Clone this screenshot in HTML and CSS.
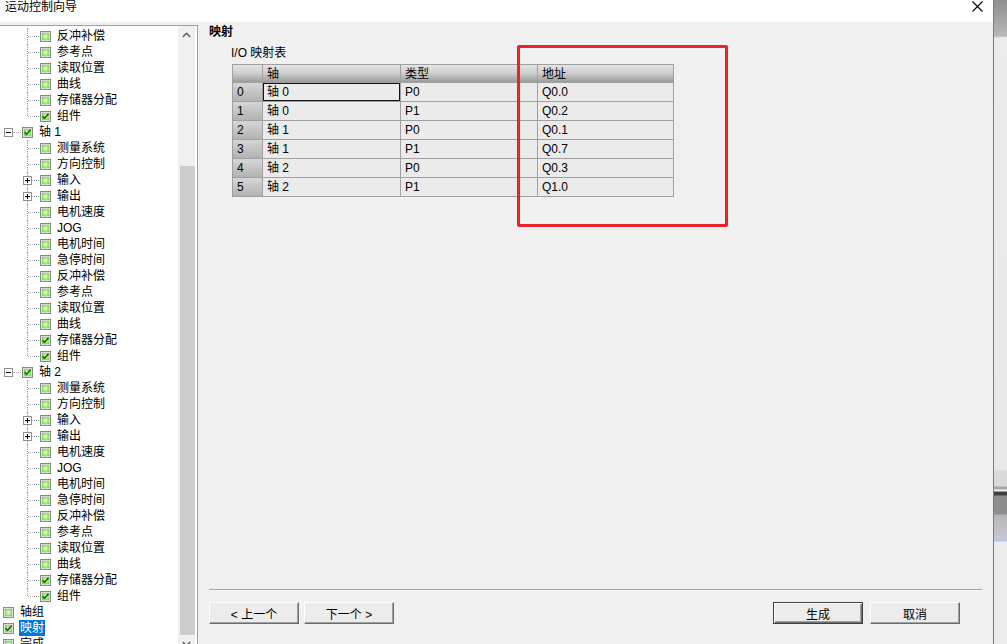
FILE: index.html
```html
<!DOCTYPE html>
<html lang="zh-CN">
<head>
<meta charset="utf-8">
<title>运动控制向导</title>
<link rel="stylesheet" href="styles.css">
</head>
<body>
<div class="window">
  <div class="titlebar">
    <span class="title">运动控制向导</span>
    <svg class="close" width="11" height="11" viewBox="0 0 11 11"><path d="M0.5 0.5L10.5 10.5M10.5 0.5L0.5 10.5" stroke="#000" stroke-width="1.1" fill="none"/></svg>
  </div>
  <div class="content">
    <div class="tree">
      <div class="tree-list">
        <div class="row l1"><span class="cb"></span><span class="lbl">反冲补偿</span></div>
        <div class="row l1"><span class="cb"></span><span class="lbl">参考点</span></div>
        <div class="row l1"><span class="cb"></span><span class="lbl">读取位置</span></div>
        <div class="row l1"><span class="cb"></span><span class="lbl">曲线</span></div>
        <div class="row l1"><span class="cb"></span><span class="lbl">存储器分配</span></div>
        <div class="row l1 last"><span class="cb on"><svg width="9" height="9" viewBox="0 0 9 9"><path d="M1.5 4.2L3.5 6.3L7.6 1.8" stroke="#1f6b0a" stroke-width="1.7" fill="none"/></svg></span><span class="lbl">组件</span></div>

        <div class="row l0"><svg class="exp" width="9" height="9" viewBox="0 0 9 9"><rect x="0.5" y="0.5" width="8" height="8" fill="#fff" stroke="#919191"/><path d="M2 4.5h5" stroke="#000"/></svg><span class="cb on"><svg width="9" height="9" viewBox="0 0 9 9"><path d="M1.5 4.2L3.5 6.3L7.6 1.8" stroke="#1f6b0a" stroke-width="1.7" fill="none"/></svg></span><span class="lbl">轴 1</span></div>
        <div class="row l1"><span class="cb"></span><span class="lbl">测量系统</span></div>
        <div class="row l1"><span class="cb"></span><span class="lbl">方向控制</span></div>
        <div class="row l1"><svg class="exp" width="9" height="9" viewBox="0 0 9 9"><rect x="0.5" y="0.5" width="8" height="8" fill="#fff" stroke="#919191"/><path d="M2 4.5h5M4.5 2v5" stroke="#000"/></svg><span class="cb"></span><span class="lbl">输入</span></div>
        <div class="row l1"><svg class="exp" width="9" height="9" viewBox="0 0 9 9"><rect x="0.5" y="0.5" width="8" height="8" fill="#fff" stroke="#919191"/><path d="M2 4.5h5M4.5 2v5" stroke="#000"/></svg><span class="cb"></span><span class="lbl">输出</span></div>
        <div class="row l1"><span class="cb"></span><span class="lbl">电机速度</span></div>
        <div class="row l1"><span class="cb"></span><span class="lbl">JOG</span></div>
        <div class="row l1"><span class="cb"></span><span class="lbl">电机时间</span></div>
        <div class="row l1"><span class="cb"></span><span class="lbl">急停时间</span></div>
        <div class="row l1"><span class="cb"></span><span class="lbl">反冲补偿</span></div>
        <div class="row l1"><span class="cb"></span><span class="lbl">参考点</span></div>
        <div class="row l1"><span class="cb"></span><span class="lbl">读取位置</span></div>
        <div class="row l1"><span class="cb"></span><span class="lbl">曲线</span></div>
        <div class="row l1"><span class="cb on"><svg width="9" height="9" viewBox="0 0 9 9"><path d="M1.5 4.2L3.5 6.3L7.6 1.8" stroke="#1f6b0a" stroke-width="1.7" fill="none"/></svg></span><span class="lbl">存储器分配</span></div>
        <div class="row l1 last"><span class="cb on"><svg width="9" height="9" viewBox="0 0 9 9"><path d="M1.5 4.2L3.5 6.3L7.6 1.8" stroke="#1f6b0a" stroke-width="1.7" fill="none"/></svg></span><span class="lbl">组件</span></div>

        <div class="row l0"><svg class="exp" width="9" height="9" viewBox="0 0 9 9"><rect x="0.5" y="0.5" width="8" height="8" fill="#fff" stroke="#919191"/><path d="M2 4.5h5" stroke="#000"/></svg><span class="cb on"><svg width="9" height="9" viewBox="0 0 9 9"><path d="M1.5 4.2L3.5 6.3L7.6 1.8" stroke="#1f6b0a" stroke-width="1.7" fill="none"/></svg></span><span class="lbl">轴 2</span></div>
        <div class="row l1"><span class="cb"></span><span class="lbl">测量系统</span></div>
        <div class="row l1"><span class="cb"></span><span class="lbl">方向控制</span></div>
        <div class="row l1"><svg class="exp" width="9" height="9" viewBox="0 0 9 9"><rect x="0.5" y="0.5" width="8" height="8" fill="#fff" stroke="#919191"/><path d="M2 4.5h5M4.5 2v5" stroke="#000"/></svg><span class="cb"></span><span class="lbl">输入</span></div>
        <div class="row l1"><svg class="exp" width="9" height="9" viewBox="0 0 9 9"><rect x="0.5" y="0.5" width="8" height="8" fill="#fff" stroke="#919191"/><path d="M2 4.5h5M4.5 2v5" stroke="#000"/></svg><span class="cb"></span><span class="lbl">输出</span></div>
        <div class="row l1"><span class="cb"></span><span class="lbl">电机速度</span></div>
        <div class="row l1"><span class="cb"></span><span class="lbl">JOG</span></div>
        <div class="row l1"><span class="cb"></span><span class="lbl">电机时间</span></div>
        <div class="row l1"><span class="cb"></span><span class="lbl">急停时间</span></div>
        <div class="row l1"><span class="cb"></span><span class="lbl">反冲补偿</span></div>
        <div class="row l1"><span class="cb"></span><span class="lbl">参考点</span></div>
        <div class="row l1"><span class="cb"></span><span class="lbl">读取位置</span></div>
        <div class="row l1"><span class="cb"></span><span class="lbl">曲线</span></div>
        <div class="row l1"><span class="cb on"><svg width="9" height="9" viewBox="0 0 9 9"><path d="M1.5 4.2L3.5 6.3L7.6 1.8" stroke="#1f6b0a" stroke-width="1.7" fill="none"/></svg></span><span class="lbl">存储器分配</span></div>
        <div class="row l1 last"><span class="cb on"><svg width="9" height="9" viewBox="0 0 9 9"><path d="M1.5 4.2L3.5 6.3L7.6 1.8" stroke="#1f6b0a" stroke-width="1.7" fill="none"/></svg></span><span class="lbl">组件</span></div>

        <div class="row root"><span class="cb"></span><span class="lbl">轴组</span></div>
        <div class="row root"><span class="cb on"><svg width="9" height="9" viewBox="0 0 9 9"><path d="M1.5 4.2L3.5 6.3L7.6 1.8" stroke="#1f6b0a" stroke-width="1.7" fill="none"/></svg></span><span class="lbl sel">映射</span></div>
        <div class="row root"><span class="cb"></span><span class="lbl">完成</span></div>
      </div>
      <div class="scroll">
        <div class="sb-btn"><svg width="9" height="6" viewBox="0 0 9 6"><path d="M0.8 5L4.5 1.3L8.2 5" stroke="#606060" stroke-width="1.6" fill="none"/></svg></div>
        <div class="sb-track"></div>
        <div class="sb-thumb"></div>
        <div class="sb-btn"><svg width="9" height="6" viewBox="0 0 9 6"><path d="M0.8 1L4.5 4.7L8.2 1" stroke="#606060" stroke-width="1.6" fill="none"/></svg></div>
      </div>
    </div>

    <div class="main">
      <div class="heading">映射</div>
      <div class="caption">I/O 映射表</div>
      <div class="grid">
        <div class="c hd corner"></div>
        <div class="c hd">轴</div>
        <div class="c hd">类型</div>
        <div class="c hd">地址</div>

        <div class="c rh">0</div><div class="c focus">轴 0</div><div class="c">P0</div><div class="c">Q0.0</div>
        <div class="c rh">1</div><div class="c">轴 0</div><div class="c">P1</div><div class="c">Q0.2</div>
        <div class="c rh">2</div><div class="c">轴 1</div><div class="c">P0</div><div class="c">Q0.1</div>
        <div class="c rh">3</div><div class="c">轴 1</div><div class="c">P1</div><div class="c">Q0.7</div>
        <div class="c rh">4</div><div class="c">轴 2</div><div class="c">P0</div><div class="c">Q0.3</div>
        <div class="c rh">5</div><div class="c">轴 2</div><div class="c">P1</div><div class="c">Q1.0</div>
      </div>

      <div class="sep"></div>
      <div class="btns">
        <button class="btn">&lt; 上一个</button>
        <button class="btn">下一个 &gt;</button>
        <button class="btn default push">生成</button>
        <button class="btn">取消</button>
      </div>
    </div>
  </div>
</div>
<div class="desk"></div>
<div class="mark"></div>
</body>
</html>
```

FILE: styles.css
```css
html, body {
  margin: 0;
  padding: 0;
}
body {
  position: relative;
  width: 1007px;
  height: 644px;
  overflow: hidden;
  display: flex;
  background: #f0f0f0;
  font-family: "Liberation Sans", "Noto Sans CJK SC", sans-serif;
  font-size: 12px;
  color: #000;
}

.window {
  width: 993px;
  flex: none;
  display: flex;
  flex-direction: column;
  background: #f0f0f0;
}

.titlebar {
  height: 22px;
  flex: none;
  background: #fff;
  display: flex;
  justify-content: space-between;
  align-items: flex-start;
  padding: 0 10px 0 5px;
}
.title {
  line-height: 14px;
  font-size: 12px;
}
.close {
  margin-top: 1px;
}

.content {
  height: 622px;
  box-sizing: border-box;
  padding-top: 3px;
  display: flex;
}

/* ---------- tree ---------- */
.tree {
  width: 198px;
  flex: none;
  box-sizing: border-box;
  background: #fff;
  border-top: 1px solid #a0a0a0;
  border-right: 1px solid #a0a0a0;
  padding: 0 2px 0 0;
  display: flex;
  overflow: hidden;
}
.tree-list {
  width: 178px;
  flex: none;
  padding-top: 2px;
}
.row {
  position: relative;
  height: 16px;
  display: flex;
  align-items: center;
  white-space: nowrap;
}
.l1 { padding-left: 40px; }
.l0 { padding-left: 22px; }
.root { padding-left: 3px; }

.l1::before {
  content: "";
  position: absolute;
  left: 27px;
  top: 0;
  height: 16px;
  border-left: 1px dotted #a0a0a0;
}
.l1.last::before { height: 8px; }
.l1::after {
  content: "";
  position: absolute;
  left: 28px;
  top: 8px;
  width: 11px;
  border-top: 1px dotted #a0a0a0;
}
.l0::after {
  content: "";
  position: absolute;
  left: 13px;
  top: 8px;
  width: 8px;
  border-top: 1px dotted #a0a0a0;
}
.exp {
  position: absolute;
  top: 4px;
  z-index: 1;
}
.l1 .exp { left: 23px; }
.l0 .exp { left: 4px; }

.cb {
  width: 11px;
  height: 11px;
  flex: none;
  box-sizing: border-box;
  border: 1px solid #8a8a8a;
  box-shadow: inset 0 0 0 1px #dcdcdc;
  background: radial-gradient(circle at 50% 50%, #e2fbd2 0%, #a6ec80 40%, #48d01c 80%, #39c411 100%);
  display: flex;
  align-items: center;
  justify-content: center;
}
.cb svg { display: block; }

.lbl {
  margin-left: 5px;
  padding: 0 1px;
  line-height: 16px;
}
.lbl.sel {
  background: #0078d7;
  color: #fff;
}

.scroll {
  width: 17px;
  flex: none;
  background: #f0f0f0;
  display: flex;
  flex-direction: column;
}
.sb-btn {
  height: 17px;
  flex: none;
  display: flex;
  align-items: center;
  justify-content: center;
}
.sb-track {
  height: 123px;
  flex: none;
}
.sb-thumb {
  height: 469px;
  flex: none;
  margin: 0 0 0 2px;
  background: #cdcdcd;
}

/* ---------- main ---------- */
.main {
  flex: 1;
  min-width: 0;
  display: flex;
  flex-direction: column;
  padding: 0 11px;
}
.heading {
  font-weight: bold;
  line-height: 14px;
}
.caption {
  margin-top: 7px;
  padding-left: 22px;
  line-height: 14px;
}
.grid {
  margin-top: 4px;
  margin-left: 23px;
  display: grid;
  grid-template-columns: 30px 138px 137px 136px;
  width: 442px;
  box-sizing: border-box;
  border-top: 1px solid #a0a0a0;
  border-left: 1px solid #a0a0a0;
}
.c {
  height: 19px;
  box-sizing: border-box;
  border-right: 1px solid #a0a0a0;
  border-bottom: 1px solid #a0a0a0;
  background: #ebebeb;
  padding: 1px 0 0 4px;
  line-height: 17px;
  white-space: nowrap;
}
.hd {
  height: 18px;
  line-height: 16px;
  background: linear-gradient(to bottom, #e4e4e4 0%, #cfcfcf 45%, #b4b4b4 75%, #9c9c9c 100%);
}
.rh {
  background: linear-gradient(to bottom, #d6d6d6 0%, #c4c4c4 50%, #b2b2b2 100%);
}
.focus {
  box-shadow: inset 0 0 0 1px #111;
}

.sep {
  margin-top: auto;
  border-top: 1px solid #a0a0a0;
  border-bottom: 1px solid #fff;
}
.btns {
  margin-top: 11px;
  margin-bottom: 20px;
  padding-right: 22px;
  display: flex;
  gap: 5px;
}
.btn {
  width: 90px;
  height: 22px;
  box-sizing: border-box;
  padding: 0;
  font: inherit;
  font-size: 12px;
  color: #000;
  background: #ececec;
  border-top: 1px solid #fff;
  border-left: 1px solid #fff;
  border-right: 1px solid #6d6d6d;
  border-bottom: 1px solid #6d6d6d;
  box-shadow: inset -1px -1px 0 #a0a0a0;
  border-radius: 0;
}
.btn.push {
  margin-left: auto;
  margin-right: 2px;
}
.btn.default {
  border: 1px solid #404040;
  box-shadow: inset 1px 1px 0 #fff, inset -1px -1px 0 #6d6d6d, inset -2px -2px 0 #a0a0a0;
}

/* ---------- desktop strip behind the window ---------- */
.desk {
  width: 14px;
  flex: none;
  box-sizing: border-box;
  border-left: 1px solid #7c7c7c;
  background: linear-gradient(to bottom,
    #8e8e8e 0px, #b8b8b8 36px, #d6d6d6 37px, #ececec 38px,
    #e8e8e8 470px, #dadada 471px, #dadada 486px,
    #a6a6a6 487px, #a6a6a6 489px, #f2f2f2 490px, #f2f2f2 491px,
    #3e3e3e 492px, #3e3e3e 495px,
    #8e8e8e 496px, #8e8e8e 514px,
    #b4b4bc 515px, #c8c8d0 538px,
    #b4c6ea 539px, #b4c6ea 541px,
    #ececec 542px, #ececec 644px);
}

/* annotation box drawn over the screenshot */
.mark {
  position: absolute;
  left: 517px;
  top: 45px;
  width: 211px;
  height: 182px;
  box-sizing: border-box;
  border: 3px solid #e8222b;
  border-radius: 2px;
  pointer-events: none;
}
```
